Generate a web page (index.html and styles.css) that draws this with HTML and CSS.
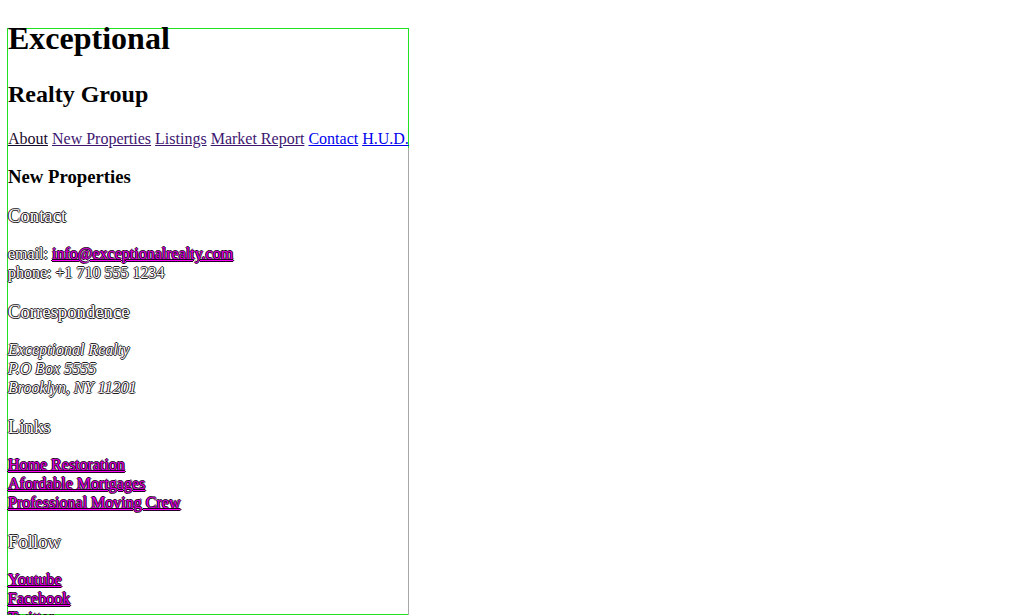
FILE: index.html
```html
<!DOCTYPE html>
<html lang="en">
<head>
<meta charset="utf-8">
<title>Exceptional Realty Group</title>
<link rel="stylesheet" href="styles.css">
</head>
<body>
<div class="page">
  <header class="masthead">
    <h1 class="brand">Exceptional</h1>
    <h2 class="brand-sub">Realty Group</h2>
    <nav class="nav">
      <a class="nav-link nav-plain" href="#">About</a>
      <a class="nav-link nav-visited" href="#">New Properties</a>
      <a class="nav-link nav-visited" href="#">Listings</a>
      <a class="nav-link nav-visited" href="#">Market Report</a>
      <a class="nav-link nav-new" href="#">Contact</a>
      <a class="nav-link nav-new" href="#">H.U.D.</a>
    </nav>
  </header>
  <main class="content">
    <h3 class="page-title">New Properties</h3>
    <section class="block">
      <h3 class="block-title ghost">Contact</h3>
      <p class="block-text ghost">email: <a class="ghost-link" href="#">info@exceptionalrealty.com</a><br>phone: +1 710 555 1234</p>
    </section>
    <section class="block">
      <h3 class="block-title ghost">Correspondence</h3>
      <address class="block-text ghost">Exceptional Realty<br>P.O Box 5555<br>Brooklyn, NY 11201</address>
    </section>
    <section class="block">
      <h3 class="block-title ghost">Links</h3>
      <p class="block-text"><a class="ghost-link" href="#">Home Restoration</a><br><a class="ghost-link" href="#">Afordable Mortgages</a><br><a class="ghost-link" href="#">Professional Moving Crew</a></p>
    </section>
    <section class="block">
      <h3 class="block-title ghost">Follow</h3>
      <p class="block-text"><a class="ghost-link" href="#">Youtube</a><br><a class="ghost-link" href="#">Facebook</a><br><a class="ghost-link" href="#">Twitter</a></p>
    </section>
  </main>
</div>
</body>
</html>
```

FILE: styles.css
```css
html, body {
  margin: 0;
  padding: 0;
  background: #fff;
}

body {
  font-family: "Liberation Serif", "Times New Roman", serif;
  font-size: 16px;
  color: #000;
}

.page {
  display: flex;
  flex-direction: column;
  width: 401px;
  height: 585px;
  margin: 28px 0 0 7px;
  border: 1px solid #22e022;
  border-right: none;
}

.masthead {
  border-right: 1px solid #22e022;
  padding-bottom: 0;
}

.content {
  flex: 1;
  border-right: 1px solid #a8a8a8;
}

.brand {
  font-size: 32px;
  font-weight: bold;
  margin: -9px 0 24px;
}

.brand-sub {
  font-size: 24px;
  font-weight: bold;
  margin: 0 0 22px;
}

.nav {
  margin: 0;
  white-space: nowrap;
}

.nav-link {
  text-decoration: underline;
}

.nav-plain { color: #1a0a2a; }
.nav-visited { color: #3d1670; }
.nav-new { color: #0000ee; }

.page-title {
  font-size: 18.72px;
  font-weight: bold;
  margin: 18px 0 17px;
}

.block-title {
  font-size: 18.72px;
  font-weight: normal;
  margin: 17px 0 17.4px;
}

.block-text {
  margin: 16px 0 18.5px;
  line-height: 19px;
  font-style: normal;
}

address.block-text {
  font-style: italic;
}

.ghost {
  color: #fff;
  text-shadow: -1px 0 #3a0a3a, 1px 0 #0a2a0a, 0 -1px #202020, 0 1px #202020;
}

.ghost-link {
  color: #e000e0;
  text-decoration: underline;
  text-decoration-color: #ff00ff;
  text-shadow: -1px 0 #200020, 1px 0 #200020, 0 -1px #200020, 0 1px #200020;
}
```
